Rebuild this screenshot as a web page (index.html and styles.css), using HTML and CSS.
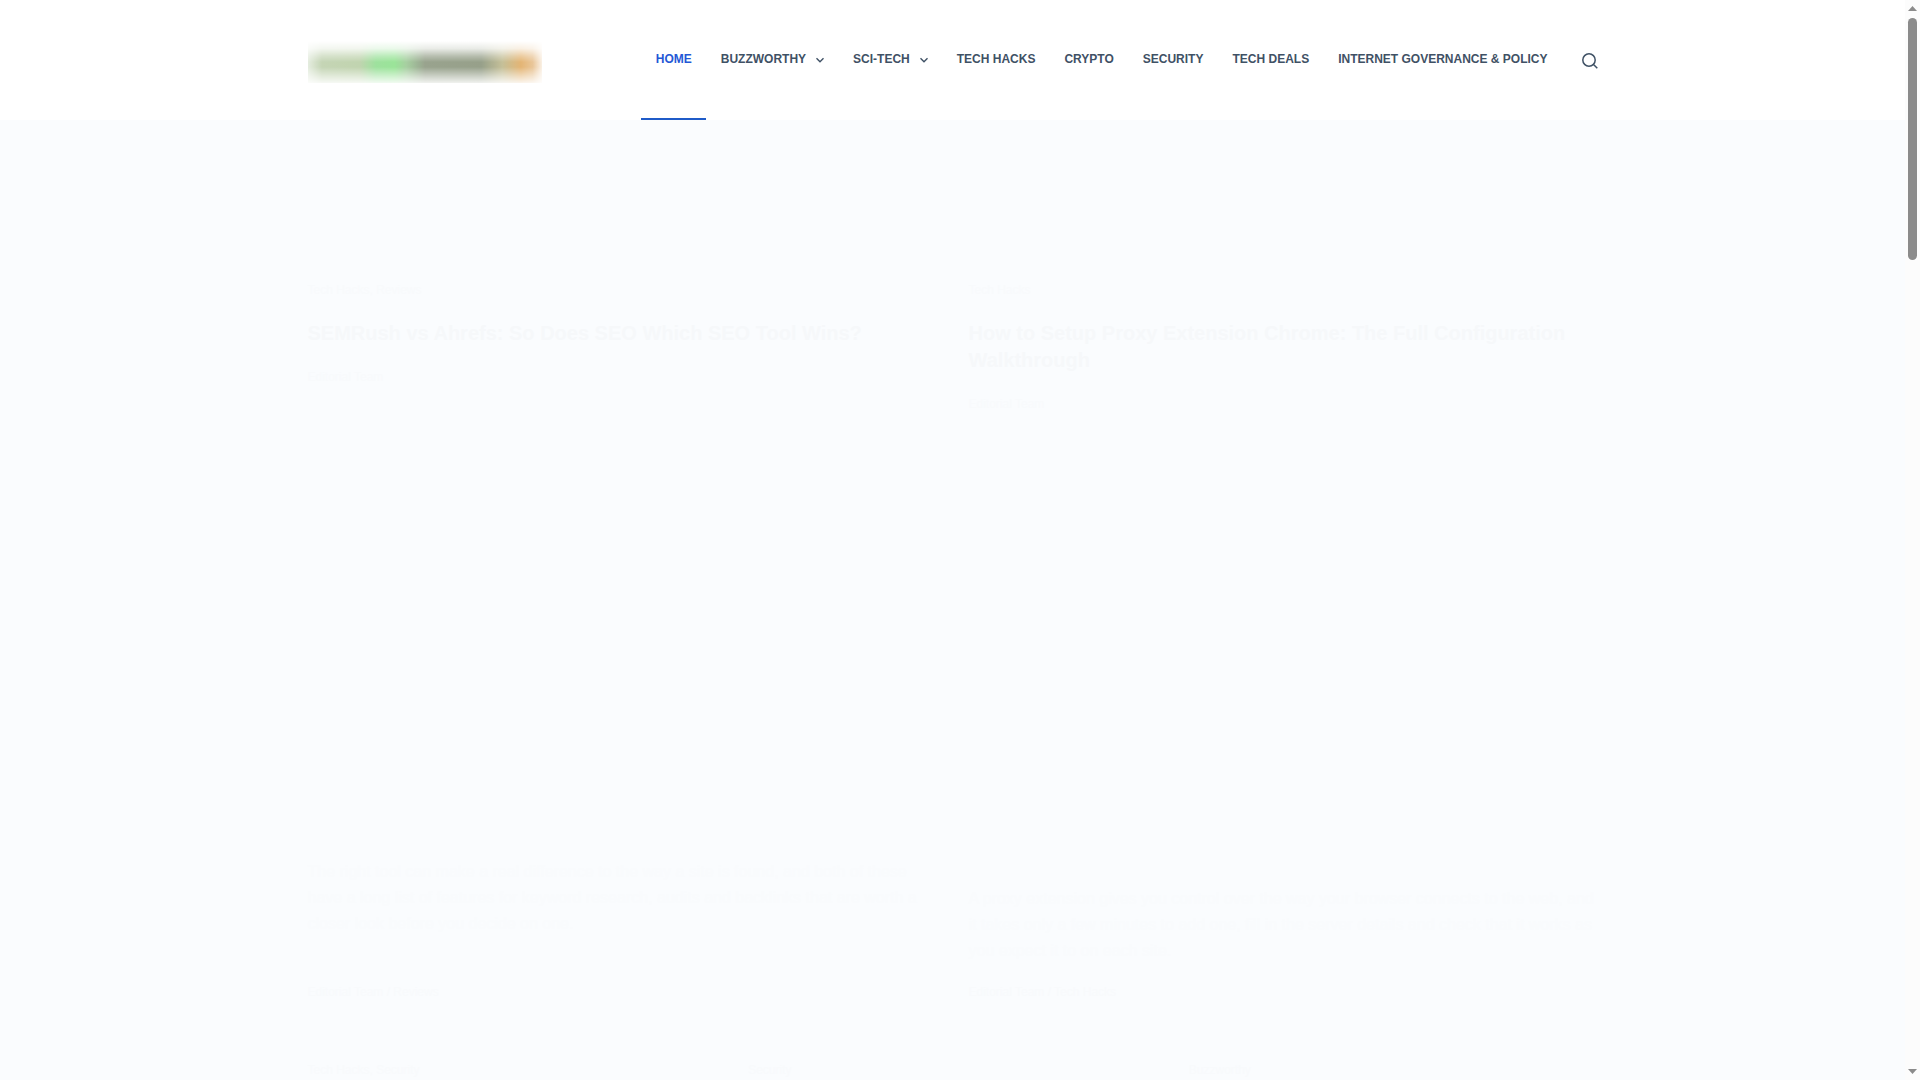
FILE: index.html
```html
<!DOCTYPE html>
<html lang="en">
<head>
    <meta charset="UTF-8">
    <meta name="viewport" content="width=device-width, initial-scale=1.0">
    <title>Home</title>
    <link rel="stylesheet" href="styles.css">
</head>
<body>
    <div class="page">
        <header class="site-header">
            <div class="container header-row">
                <a href="#" class="logo" aria-label="Home">
                    <svg width="234" height="42" viewBox="0 0 234 42">
                        <defs>
                            <linearGradient id="logo-colors">
                                <stop offset="0" stop-color="#e4ecde"/>
                                <stop offset="0.06" stop-color="#c2d3b2"/>
                                <stop offset="0.22" stop-color="#bed2ac"/>
                                <stop offset="0.29" stop-color="#9ae09a"/>
                                <stop offset="0.37" stop-color="#96e394"/>
                                <stop offset="0.42" stop-color="#a3cd9d"/>
                                <stop offset="0.5" stop-color="#949f89"/>
                                <stop offset="0.74" stop-color="#929c85"/>
                                <stop offset="0.83" stop-color="#c2bd94"/>
                                <stop offset="0.91" stop-color="#e3b26f"/>
                                <stop offset="0.96" stop-color="#e8c394"/>
                                <stop offset="1" stop-color="#faf0e4"/>
                            </linearGradient>
                            <linearGradient id="logo-fade" x2="0" y2="1">
                                <stop offset="0" stop-color="#000"/>
                                <stop offset="0.18" stop-color="#333"/>
                                <stop offset="0.36" stop-color="#aaa"/>
                                <stop offset="0.5" stop-color="#f4f4f4"/>
                                <stop offset="0.62" stop-color="#f4f4f4"/>
                                <stop offset="0.84" stop-color="#777"/>
                                <stop offset="1" stop-color="#222"/>
                            </linearGradient>
                            <mask id="logo-mask">
                                <rect width="234" height="42" fill="url(#logo-fade)"/>
                            </mask>
                        </defs>
                        <rect width="234" height="42" fill="url(#logo-colors)" mask="url(#logo-mask)"/>
                    </svg>
                </a>
                <nav class="main-nav">
                    <a href="#" class="active">Home</a>
                    <a href="#">Buzzworthy
                        <svg class="chevron" viewBox="0 0 8 8"><path d="M0.5 2.2 4 5.7 7.5 2.2"/></svg>
                    </a>
                    <a href="#">Sci-Tech
                        <svg class="chevron" viewBox="0 0 8 8"><path d="M0.5 2.2 4 5.7 7.5 2.2"/></svg>
                    </a>
                    <a href="#">Tech Hacks</a>
                    <a href="#">Crypto</a>
                    <a href="#">Security</a>
                    <a href="#">Tech Deals</a>
                    <a href="#">Internet Governance &amp; Policy</a>
                </nav>
                <button class="search" type="button" aria-label="Search">
                    <svg viewBox="0 0 16 16"><circle cx="7" cy="7" r="6.2"/><path d="M11.5 11.5 15.3 15.3"/></svg>
                </button>
            </div>
        </header>

        <main class="container">
            <div class="posts featured">
                <article class="post">
                    <div class="category">Tech Hacks, Reviews</div>
                    <h2>SEMRush vs Ahrefs: So Does SEO Which SEO Tool Wins?</h2>
                    <div class="meta">Editorial Team</div>
                    <div class="thumbnail"></div>
                    <p>The right tool can make a real difference to the way a site is found, and both of these have a long list of features for keyword research, audits and backlinks that are worth a closer look before you decide on one.</p>
                    <div class="meta bottom">Editorial Team / Reviews</div>
                </article>
                <article class="post">
                    <div class="category">Tech Hacks</div>
                    <h2>How to Setup Proxy Extension Chrome: The Full Configuration Walkthrough</h2>
                    <div class="meta">Editorial Team</div>
                    <div class="thumbnail"></div>
                    <p>A proxy extension gives you control over the way your browser connects to the web, and it takes only a few minutes to add one, fill in the server details and check that it works as you expect it to on each site.</p>
                    <div class="meta bottom">Editorial Team / Tech Hacks</div>
                </article>
            </div>
            <div class="posts latest">
                <div class="category">Tech Hacks, Security</div>
                <div class="category">Security</div>
                <div class="category">Buzzworthy</div>
            </div>
        </main>
    </div>

    <div class="scrollbar" aria-hidden="true">
        <svg viewBox="0 0 9 5"><path d="M0 5 4.5 0 9 5z"/></svg>
        <div class="track"><div class="thumb"></div></div>
        <svg viewBox="0 0 9 5"><path d="M0 0 4.5 5 9 0z"/></svg>
    </div>
</body>
</html>
```
FILE: styles.css
```css
* {
    box-sizing: border-box;
}
body {
    margin: 0;
    padding-right: 15px;
    height: 100vh;
    overflow: hidden;
    font-family: "Liberation Sans", Arial, sans-serif;
    background: #fdfdfe;
}
.page {
    min-height: 100vh;
    background: #fafcfe;
}
.container {
    width: 90%;
    max-width: 1290px;
    margin: 0 auto;
}
.site-header {
    background: #fff;
}
.header-row {
    display: flex;
    align-items: center;
    height: 120px;
}
.logo {
    padding-top: 4px;
}
.logo svg {
    display: block;
}
.main-nav {
    display: flex;
    height: 100%;
    margin-left: auto;
}
.main-nav a {
    display: flex;
    align-items: center;
    padding: 0 14px 0 15px;
    border-bottom: 2px solid transparent;
    color: #3f5165;
    font-size: 12px;
    font-weight: bold;
    text-transform: uppercase;
    text-decoration: none;
    white-space: nowrap;
}
.main-nav a.active {
    color: #2458d6;
    border-color: #1f5bc8;
}
.chevron {
    width: 8px;
    height: 8px;
    margin: 2px 0 0 10px;
    fill: none;
    stroke: #3f5165;
    stroke-width: 1.4;
}
.search {
    margin-left: 20px;
    padding: 1px 0 0;
    border: 0;
    background: none;
}
.search svg {
    display: block;
    width: 16px;
    height: 16px;
    fill: none;
    stroke: #3f5165;
    stroke-width: 1.5;
}
.posts {
    display: grid;
    gap: 32px;
    color: #f8fafc;
}
.featured {
    grid-template-columns: 1fr 1fr;
    padding-top: 160px;
}
.latest {
    grid-template-columns: 1fr 1fr 1fr;
    padding-top: 58px;
}
.post {
    display: flex;
    flex-direction: column;
}
.category, .meta {
    font-size: 12px;
    line-height: 20px;
}
.post h2 {
    margin: 20px 0;
    font-size: 20px;
    line-height: 27px;
    color: #f6f8fa;
}
.thumbnail {
    aspect-ratio: 4 / 3;
}
.post p {
    margin: 0 0 18px;
    font-size: 16px;
    line-height: 26px;
    color: #f9fbfd;
}
.bottom {
    margin-top: auto;
}
.scrollbar {
    position: fixed;
    top: 0;
    right: 0;
    display: flex;
    flex-direction: column;
    align-items: center;
    width: 15px;
    height: 100vh;
    padding: 6px 0;
    background: #fcfcfc;
}
.scrollbar svg {
    width: 9px;
    height: 5px;
    fill: #8b8b8b;
}
.track {
    flex: 1;
    width: 9px;
    padding: 7px 0;
}
.thumb {
    height: 23%;
    min-height: 242px;
    border-radius: 5px;
    background: #8b8b8b;
}
```
